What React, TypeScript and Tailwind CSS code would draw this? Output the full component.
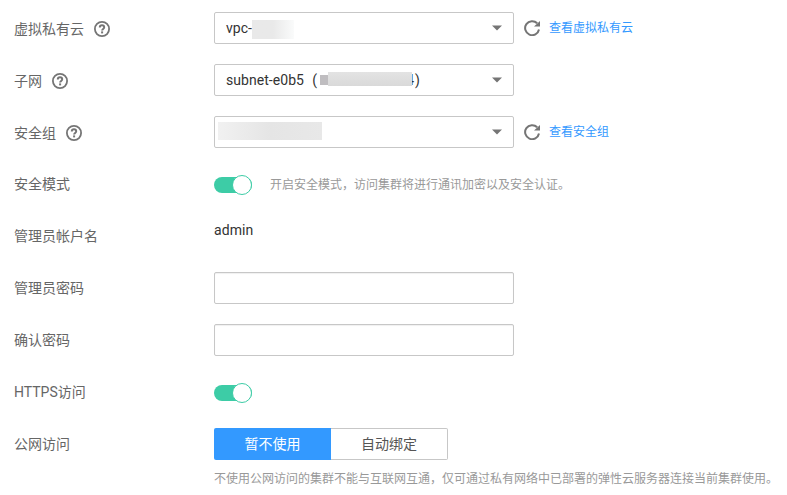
import type { ReactNode } from "react";

function HelpIcon() {
  return (
    <svg className="ml-[10px] size-4 shrink-0" viewBox="0 0 16 16" fill="none">
      <circle cx="8" cy="8" r="7.1" stroke="#757575" strokeWidth="1.8" />
      <path
        d="M5.8 6.4C5.8 5 6.7 4.3 8 4.3s2.2.8 2.2 2c0 1.6-2.1 1.7-2.1 3.3"
        stroke="#757575"
        strokeWidth="2"
      />
      <rect x="7.1" y="10.4" width="2" height="2" fill="#757575" />
    </svg>
  );
}

function RefreshIcon() {
  return (
    <svg className="ml-[10px] size-4 shrink-0" viewBox="0 0 16 16" fill="none">
      <path d="M15 9.5A7 7 0 1 1 13.2 3.3" stroke="#757575" strokeWidth="2" />
      <path d="M16 1v5.5h-6z" fill="#757575" />
    </svg>
  );
}

function Row({ label, help, children }: { label: string; help?: boolean; children?: ReactNode }) {
  return (
    <div className="flex h-8 items-center">
      <div className={`flex w-[200px] shrink-0 items-center text-[#666] ${help ? "pt-[2px]" : ""}`}>
        <span>{label}</span>
        {help && <HelpIcon />}
      </div>
      {children}
    </div>
  );
}

function Select({ children }: { children: ReactNode }) {
  return (
    <div className="flex h-8 w-[300px] shrink-0 items-center rounded-[2px] border border-[#c7c7c7] pr-[11px] text-[#333]">
      {children}
      <svg className="ml-auto h-[6px] w-[10px]" viewBox="0 0 10 6">
        <path d="M0 0.5h10L5 5.5z" fill="#757575" />
      </svg>
    </div>
  );
}

function ViewLink({ children }: { children: ReactNode }) {
  return (
    <>
      <RefreshIcon />
      <a className="ml-[9px] text-[12px] text-[#3399ff]">{children}</a>
    </>
  );
}

function Toggle() {
  return (
    <div className="mt-[2px] flex h-4 w-[38px] shrink-0 items-center justify-end rounded-full bg-[#3dcca6]">
      <div className="size-5 shrink-0 rounded-full border border-[#3dcca6] bg-white" />
    </div>
  );
}

function Input() {
  return <input className="h-8 w-[300px] rounded-[2px] border border-[#c7c7c7] shadow-[inset_0_1px_1px_#f0f0f0] outline-none" />;
}

export default function App() {
  return (
    <main className="flex h-[495px] w-[787px] flex-col gap-5 overflow-hidden bg-white pt-3 pl-[14px] font-[Roboto,'Noto_Sans_CJK_SC',sans-serif] text-[14px] leading-5 whitespace-nowrap">
      <Row label="虚拟私有云" help>
        <Select>
          <span className="ml-[11px]">vpc-</span>
          <span className="mt-[2px] h-[19px] w-[42px] bg-linear-to-r from-[#e9e9e9] via-[#e9e9e9] to-[#fafbfb]" />
        </Select>
        <ViewLink>查看虚拟私有云</ViewLink>
      </Row>
      <Row label="子网" help>
        <Select>
          <span className="ml-[11px] w-[79px] tracking-[0.05px]">subnet-e0b5</span>
          <span className="flex w-[15px] justify-end pr-[3px]">(</span>
          <span className="h-[10px] w-2 bg-[#bfbdc0]" />
          {/* The address is masked except for the edge of its last digit. */}
          <span className="relative flex w-[86px] justify-end">
            4
            <span className="absolute top-[2px] left-0 h-[14px] w-[84px] bg-linear-to-b from-[#e3e3e3] to-[#d9d9d9]" />
          </span>
          <span className="ml-px">)</span>
        </Select>
      </Row>
      <Row label="安全组" help>
        <Select>
          <span className="mb-[2px] ml-[3px] h-[18px] w-[104px] bg-linear-to-r from-[#f1f1f1] via-[#e5e5e5] to-[#e8e8e8]" />
        </Select>
        <ViewLink>查看安全组</ViewLink>
      </Row>
      <Row label="安全模式">
        <Toggle />
        <span className="ml-[18px] pt-[2px] text-[12px] text-[#999]">开启安全模式，访问集群将进行通讯加密以及安全认证。</span>
      </Row>
      <Row label="管理员帐户名">
        <span className="pb-3 tracking-[0.1px] text-[#333]">admin</span>
      </Row>
      <Row label="管理员密码">
        <Input />
      </Row>
      <Row label="确认密码">
        <Input />
      </Row>
      <Row label="HTTPS访问">
        <Toggle />
      </Row>
      <div>
        <Row label="公网访问">
          <div className="flex">
            <button className="h-8 w-[117px] rounded-l-[2px] bg-[#3399ff] text-white">暂不使用</button>
            <button className="h-8 w-[117px] rounded-r-[2px] border border-l-0 border-[#c7c7c7] text-[#555]">自动绑定</button>
          </div>
        </Row>
        <p className="mt-[9px] ml-[200px] text-[12px] text-[#999]">
          不使用公网访问的集群不能与互联网互通，仅可通过私有网络中已部署的弹性云服务器连接当前集群使用。
        </p>
      </div>
    </main>
  );
}
